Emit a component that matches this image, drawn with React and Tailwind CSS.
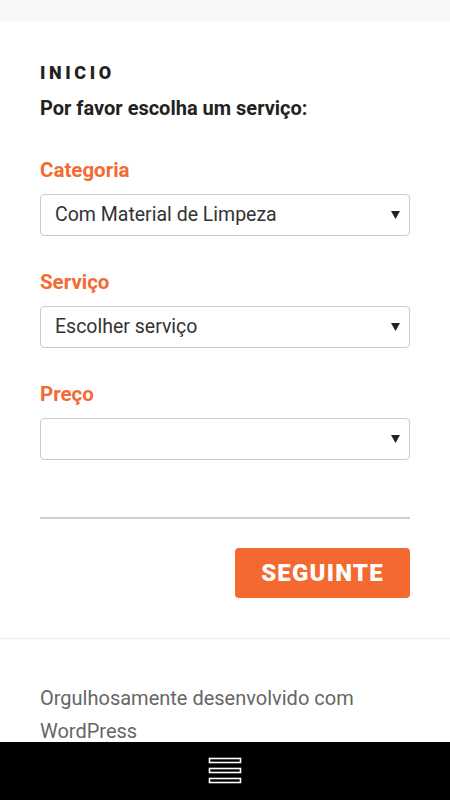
import React from 'react';

const font = { fontFamily: 'Roboto, "Liberation Sans", sans-serif' };

function Field({ label, value }) {
  return (
    <div className="flex flex-col gap-[11px]">
      <div className="text-[20.5px] font-bold text-[#f26b32] leading-[26px]">{label}</div>
      <div className="h-[42px] border border-[#cccccc] rounded-[4px] flex items-center justify-between pl-[14px] pr-[9px] bg-white">
        <span className="text-[19.5px] text-[#333333]">{value}</span>
        <svg width="9" height="8" viewBox="0 0 9 8">
          <path d="M0 0h9L4.5 8z" fill="#222222" />
        </svg>
      </div>
    </div>
  );
}

export default function App() {
  return (
    <div className="relative min-h-[800px] bg-white overflow-hidden" style={font}>
      {/* top band */}
      <div className="h-[22px] bg-[#f8f8f8]" />

      {/* main content */}
      <div className="px-[40px] pt-[40px] flex flex-col">
        <h2 className="text-[18px] font-black tracking-[0.2em] text-[#222222] leading-[22px]">INICIO</h2>
        <p className="mt-[12px] text-[20px] font-bold text-[#222222] leading-[24px]">Por favor escolha um serviço:</p>

        <div className="mt-[37px] flex flex-col gap-[33px]">
          <Field label="Categoria" value="Com Material de Limpeza" />
          <Field label="Serviço" value="Escolher serviço" />
          <Field label="Preço" value="" />
        </div>

        <div className="mt-[57px] h-[2px] bg-[#cfcfcf]" />

        <div className="flex justify-end mt-[29px] mb-[40px]">
          <button className="w-[175px] h-[50px] bg-[#f4692f] rounded-[4px] text-white text-[24px] font-black tracking-[0.05em]">
            SEGUINTE
          </button>
        </div>
      </div>

      {/* footer */}
      <footer className="border-t border-[#eeeeee] px-[40px] pt-[43px] pb-[60px]">
        <p className="text-[20px] text-[#666666] leading-[33px]">
          Orgulhosamente desenvolvido com WordPress
        </p>
      </footer>

      {/* bottom nav bar */}
      <div className="fixed bottom-0 left-0 right-0 h-[58px] bg-black flex items-center justify-center">
        <svg width="34" height="28" viewBox="0 0 34 28">
          <rect x="1.5" y="1.5" width="31" height="4" fill="none" stroke="#ffffff" strokeWidth="1.6" />
          <rect x="1.5" y="11.5" width="31" height="4" fill="none" stroke="#ffffff" strokeWidth="1.6" />
          <rect x="1.5" y="21.5" width="31" height="4" fill="none" stroke="#ffffff" strokeWidth="1.6" />
        </svg>
      </div>
    </div>
  );
}
